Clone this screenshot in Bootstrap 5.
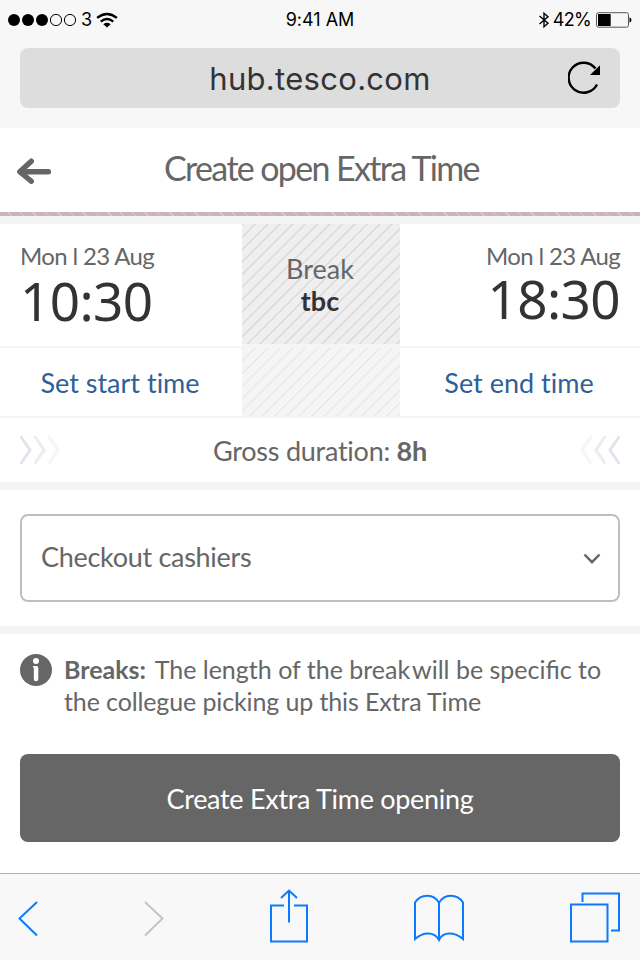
<!DOCTYPE html>
<html lang="en">
<head>
<meta charset="utf-8">
<meta name="viewport" content="width=device-width, initial-scale=1">
<title>Create open Extra Time</title>
<link href="https://cdn.jsdelivr.net/npm/bootstrap@5.3.0/dist/css/bootstrap.min.css" rel="stylesheet">
<style>
body{width:640px;height:960px;overflow:hidden;background:#fff;color:#666;font-family:Lato,"Noto Sans",sans-serif;font-size:27px;line-height:32px;font-variant-ligatures:none}
svg{display:block;flex:none}
.t{white-space:nowrap}
.chrome{background:#f7f7f7;font-family:Inter,"Liberation Sans",sans-serif;color:#000;height:128px}
.status{height:48px;padding:0 8px 8px;display:grid;grid-template-columns:1fr auto 1fr;font-size:18px;line-height:24px}
.carrier{margin:0 4px 0 3px}
.charge{margin:0 5px 0 3px;letter-spacing:-.7px}
.address{height:60px;margin:0 20px;background:#ddd;border-radius:8px;color:#333;font-size:31px;display:grid;grid-template-columns:1fr auto 1fr}
.url{letter-spacing:.3px;padding-top:2px}
.titlebar{height:84px;display:grid;grid-template-columns:1fr auto 1fr;padding:0 16px}
.titlebar h1{font-size:34px;line-height:44px;letter-spacing:-1.65px;margin:0 0 4px 3px}
.stripe{height:4px;background:repeating-linear-gradient(45deg,#c9b4bb 0 7.7px,#dccdd2 7.9px 8.8px)}
.band{height:8px;background:#f4f4f4}
.times{display:grid;grid-template-columns:242px 158px 240px;grid-template-rows:122px 68px;row-gap:2px;background:#f5f5f5;padding-bottom:2px}
.cell{background:#fff}
.hatch{height:120px;padding:2px 2px 0 0;background:repeating-linear-gradient(135deg,#dcdcdc 0 1.2px,#efefef 1.8px 8.4px,#dcdcdc 8.8px)}
.hatch-soft{background:repeating-linear-gradient(135deg,#eaeaea 0 1.2px,#f5f5f5 1.8px 8.4px,#eaeaea 8.8px)}
.from{padding:18px 0 0 20px}
.until{padding:18px 20px 0 0}
.day{font-size:24px;line-height:28px;letter-spacing:-.65px}
.clock{font-family:"Noto Sans",sans-serif;font-size:53px;line-height:62px;letter-spacing:-.6px;color:#333}
.until .clock{line-height:58px}
.dark{color:#333}
.act{color:#2f5f98;text-decoration:none;padding:2px 2px 0 0}
.gross{height:64px;padding:0 20px;display:grid;grid-template-columns:1fr auto 1fr}
.total{letter-spacing:-.25px;padding-top:2px}
.choice{height:88px;margin:24px 20px;border:2px solid #bfbfbf;border-radius:8px;padding:0 17px 0 19px}
.choice .t{letter-spacing:-.3px;padding-bottom:2px}
.note{padding:20px 20px 0;height:120px;font-size:25px}
.note p{font-variant-ligatures:common-ligatures;margin-top:-1px}
.note p b{margin-right:3px}
.closer{margin-left:-4px}
.more{letter-spacing:-.12px}
.go{height:88px;margin:0 20px 31px;width:600px;background:#666;color:#fff;border:0;border-radius:8px;font-size:27px;letter-spacing:-.3px;padding-top:3px}
.tools{height:87px;border-top:1px solid #b2b2b2;background:#f8f8f8}
</style>
</head>
<body>
<header class="chrome">
 <div class="status align-items-center">
  <div class="d-flex align-items-center">
   <svg width="70" height="14"><g><circle cx="6" cy="7" r="6"/><circle cx="20" cy="7" r="6"/><circle cx="34" cy="7" r="6"/><g fill="none" stroke="#000"><circle cx="48" cy="7" r="5.6"/><circle cx="62" cy="7" r="5.6"/></g></g></svg>
   <span class="t carrier">3</span>
   <svg width="22" height="17" viewBox="0 0 24 18" fill="none" stroke="#000" stroke-width="2.6"><path d="M1.200 6.2Q12-2.600 22.800 6.2M5.2 10.2Q12 4.400 18.800 10.2"/><path d="M12 16.700 8 13Q12 9.800 16 13Z" fill="#000" stroke="none"/></svg>
  </div>
  <span class="t">9:41 AM</span>
  <div class="d-flex align-items-center justify-content-end">
   <svg width="12" height="16" viewBox="0 0 12 16" fill="none" stroke="#000" stroke-width="1.4"><path d="M1.500 4 10 11.300 6 14.700V1.300L10 4.700 1.500 12"/></svg>
   <span class="t charge">42%</span>
   <svg width="36" height="16"><rect x=".5" y=".7" width="32" height="14.500" rx="2" fill="none" stroke="#555"/><path d="M2 2h12.700v12H2z"/><path d="M33.500 5.300q2 1 2 2.700t-2 2.700z"/></svg>
  </div>
 </div>
 <div class="address align-items-center">
  <span></span><span class="t url">hub.tesco.com</span>
  <svg class="ms-auto me-3" width="36" height="36" viewBox="0 0 36 36"><path d="M29 24.500A15 15 0 1 1 27.500 8.500" fill="none" stroke="#000" stroke-width="2.400"/><path d="M32 5.300V15H22z"/></svg>
 </div>
</header>
<div class="titlebar align-items-center">
 <svg width="36" height="28" viewBox="0 0 36 28" fill="none" stroke="#666" stroke-width="5.400" stroke-linecap="round" stroke-linejoin="round"><path d="M32.400 15.700H4M15.300 5.200 3.800 15.700 15.300 25.300"/></svg>
 <h1 class="t fw-normal">Create open Extra Time</h1><span></span>
</div>
<div class="stripe"></div>
<div class="band"></div>
<main>
 <section class="times">
  <div class="cell from d-flex flex-column"><span class="t day">Mon l 23 Aug</span><span class="t clock">10:30</span></div>
  <div class="hatch d-flex flex-column align-items-center justify-content-center"><span class="t">Break</span><b class="t dark">tbc</b></div>
  <div class="cell until d-flex flex-column align-items-end"><span class="t day">Mon l 23 Aug</span><span class="t clock">18:30</span></div>
  <div class="cell d-flex align-items-center justify-content-center"><a class="act t" href="#">Set start time</a></div>
  <div class="hatch-soft"></div>
  <div class="cell d-flex align-items-center justify-content-center"><a class="act t" href="#">Set end time</a></div>
 </section>
 <section class="gross align-items-center">
  <svg width="40" height="28" viewBox="0 0 40 28" fill="none" stroke-width="3" stroke-linecap="round"><path d="M1.500 1.500 10 14 1.500 26.500" stroke="#dfe5ea"/><path d="M15.500 1.500 24 14l-8.500 12.500" stroke="#e9edf0"/><path d="M29.500 1.500 38 14l-8.500 12.500" stroke="#f3f5f7"/></svg>
  <span class="t total">Gross duration: <b>8h</b></span>
  <svg class="ms-auto" width="40" height="28" viewBox="0 0 40 28" fill="none" stroke-width="3" stroke-linecap="round"><path d="M38.500 1.500 30 14l8.500 12.500" stroke="#dfe5ea"/><path d="M24.500 1.500 16 14l8.500 12.500" stroke="#e9edf0"/><path d="M10.500 1.500 2 14l8.500 12.500" stroke="#f3f5f7"/></svg>
 </section>
 <div class="band"></div>
 <div class="choice d-flex align-items-center justify-content-between">
  <span class="t">Checkout cashiers</span>
  <svg width="18" height="12" viewBox="0 0 18 12" fill="none" stroke="#666" stroke-width="2.500"><path d="M1.500 2.500 9 10.200 16.500 2.500"/></svg>
 </div>
 <div class="band"></div>
 <div class="note d-flex">
  <svg width="32" height="32" viewBox="0 0 32 32"><circle cx="16" cy="16" r="16" fill="#666"/><circle cx="16" cy="7" r="3" fill="#fff"/><path d="M12.700 12h4q1.600 0 1.600 1.600V25q0 2.300-2.300 2.300T13.800 25V14.300z" fill="#fff"/></svg>
  <p class="t mb-0 ms-2 ps-1"><b>Breaks:</b> The length of the break<span class="closer"> will be specific to</span><br><span class="more">the collegue picking up this Extra Time</span></p>
 </div>
 <button class="go d-block t">Create Extra Time opening</button>
</main>
<footer class="tools">
 <svg width="640" height="86" viewBox="0 874 640 86" fill="none" stroke="#0a7aff" stroke-width="2"><path d="M37 902 19.500 918.500 37 935.500"/><path d="M145 902 162.500 918.500 145 935.500" stroke="#c4c4c4"/><path d="M284 905.500H271V941.500H307V905.500H294M289 922.500V891M281 898l8-7.500 8 7.500"/><path d="M439 940V903C434 893.500 421 893.500 415 902.500V939C423 932 434 931 439 940C443 931 455 932 463 939V902.500C457 893.500 444 893.500 439 903"/><path d="M571 904.500H607.500V941.500H571ZM582.500 902V893.500H619V930.500H611"/></svg>
</footer>
<script src="https://cdn.jsdelivr.net/npm/bootstrap@5.3.0/dist/js/bootstrap.bundle.min.js"></script>
</body>
</html>
